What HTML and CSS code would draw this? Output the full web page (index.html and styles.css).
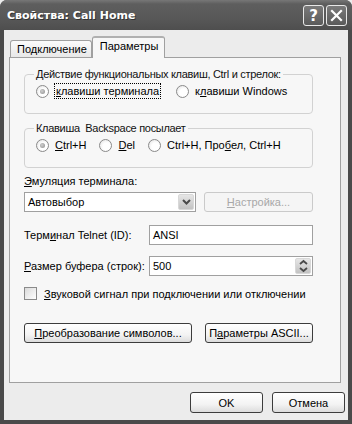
FILE: index.html
```html
<!DOCTYPE html>
<html lang="ru">
<head>
  <meta charset="UTF-8" />
  <title>Свойства: Call Home</title>
  <link rel="stylesheet" href="styles.css">
</head>
<body>

  <div class="window">
    <!-- Title bar -->
    <div class="titlebar">
      <span class="title">Свойства: Call Home</span>
      <div class="caption-btns">
        <span class="cbtn">?</span>
        <span class="cbtn">
          <svg width="13" height="13" viewBox="0 0 13 13"><path d="M2 2 L11 11 M11 2 L2 11" stroke="#fff" stroke-width="2.2" stroke-linecap="square"/></svg>
        </span>
      </div>
    </div>

    <div class="client">
      <div class="tabs">
        <div class="tab">Подключение</div>
        <div class="tab active">Параметры</div>
      </div>

      <div class="panel">
        <fieldset class="group">
          <legend>Действие функциональных клавиш, Ctrl и стрелок:</legend>
          <div class="row radios">
            <label class="radio"><span class="rb on"></span><span class="focus"><u>к</u>лавиши терминала</span></label>
            <label class="radio r2"><span class="rb"></span><span>к<u>л</u>авиши Windows</span></label>
          </div>
        </fieldset>

        <fieldset class="group g2">
          <legend>Клавиша&nbsp; Backspace посылает</legend>
          <div class="row radios">
            <label class="radio"><span class="rb on"></span><span><u>C</u>trl+H</span></label>
            <label class="radio r-del"><span class="rb"></span><span><u>D</u>el</span></label>
            <label class="radio r-sp"><span class="rb"></span><span>Ctrl+H, Про<u>б</u>ел, Ctrl+H</span></label>
          </div>
        </fieldset>

        <div class="caption"><u>Э</u>муляция терминала:</div>
        <div class="row combo-row">
          <div class="combo">
            <span>Автовыбор</span>
            <span class="combo-btn">
              <svg width="9" height="6" viewBox="0 0 9 6"><path d="M1 1 L4.5 4.5 L8 1" fill="none" stroke="#4a4a4a" stroke-width="2"/></svg>
            </span>
          </div>
          <div class="btn disabled"><u>Н</u>астройка...</div>
        </div>

        <div class="row field-row">
          <span class="field-label">Терм<u>и</u>нал Telnet (ID):</span>
          <div class="edit">ANSI</div>
        </div>

        <div class="row field-row">
          <span class="field-label"><u>Р</u>азмер буфера (строк):</span>
          <div class="edit spin">
            <span>500</span>
            <span class="spin-btn">
              <svg width="9" height="14" viewBox="0 0 9 14"><path d="M1 5 L4.5 2 L8 5 M1 9 L4.5 12 L8 9" fill="none" stroke="#4a4a4a" stroke-width="1.8"/></svg>
            </span>
          </div>
        </div>

        <label class="row check-row"><span class="cb"></span><span><u>З</u>вуковой сигнал при подключении или отключении</span></label>

        <div class="row btn-row">
          <div class="btn wide"><u>П</u>реобразование символов...</div>
          <div class="btn ascii">П<u>а</u>раметры ASCII...</div>
        </div>
      </div>

      <div class="footer">
        <div class="btn dlg">OK</div>
        <div class="btn dlg">Отмена</div>
      </div>
    </div>
  </div>

</body>
</html>
```

FILE: styles.css
```css
body {
  margin: 0;
  background: #ececec;
  font-family: "Liberation Sans", Arial, sans-serif;
  font-size: 11px;
  color: #000;
  white-space: nowrap;
}
u {
  text-decoration: underline;
  text-underline-offset: 1px;
}
.window {
  width: 352px;
  height: 424px;
  box-sizing: border-box;
  background: #4a4a4a;
  display: flex;
  flex-direction: column;
  border-radius: 7px 7px 0 0;
  overflow: hidden;
}
.titlebar {
  height: 30px;
  display: flex;
  align-items: center;
  justify-content: space-between;
  padding: 0 5px 0 7px;
  background: linear-gradient(#777 0, #5e5e5e 4px, #585858 60%, #4e4e4e 100%);
  color: #fff;
}
.title {
  font-family: "DejaVu Sans", sans-serif;
  font-weight: bold;
  font-size: 11px;
  text-shadow: 1px 1px 0 #333;
}
.caption-btns {
  display: flex;
  gap: 2px;
  margin-top: 1px;
}
.cbtn {
  width: 19px;
  height: 19px;
  border: 1px solid #e8e8e8;
  border-radius: 3px;
  background: linear-gradient(#7a7a7a, #5a5a5a);
  color: #fff;
  font-family: "DejaVu Sans", sans-serif;
  font-weight: bold;
  font-size: 15px;
  display: flex;
  align-items: center;
  justify-content: center;
}
.client {
  flex: 1;
  margin: 0 4px 4px 4px;
  background: #ececec;
  display: flex;
  flex-direction: column;
}
.tabs {
  display: flex;
  align-items: flex-end;
  padding: 5px 0 0 6px;
  height: 22px;
}
.tab {
  height: 16px;
  padding: 0 4px 0 6px;
  border: 1px solid #a0a0a0;
  border-bottom: none;
  border-radius: 3px 3px 0 0;
  background: linear-gradient(#fbfbfb, #e8e8e8);
  line-height: 17px;
}
.tab.active {
  height: 20px;
  padding: 0 6px 0 7px;
  background: #f7f7f7;
  border-top: 2px solid #b0b0b0;
  margin-bottom: -1px;
  position: relative;
  z-index: 1;
  line-height: 16px;
}
.panel {
  margin: 0 7px 0 5px;
  height: 326px;
  box-sizing: border-box;
  border: 1px solid #a0a0a0;
  background: #f7f7f7;
  padding: 10px 27px 0 14px;
  display: flex;
  flex-direction: column;
}
.group {
  margin: 0;
  padding: 2px 0 0 9px;
  height: 46px;
  box-sizing: border-box;
  border: 1px solid #d2d2d2;
  border-radius: 4px;
}
.group legend {
  padding: 0 2px;
  line-height: 13px;
  color: #111;
  letter-spacing: -0.3px;
}
.g2 {
  margin-top: 8px;
}
.row {
  display: flex;
  align-items: center;
}
.radios {
  margin-left: 2px;
  height: 16px;
}
.radio {
  display: flex;
  align-items: center;
  gap: 6px;
}
.rb {
  width: 11px;
  height: 11px;
  border: 1px solid #8a8a8a;
  border-radius: 50%;
  background: radial-gradient(circle at 60% 60%, #fff 40%, #dedede 100%);
  box-sizing: content-box;
  display: flex;
  align-items: center;
  justify-content: center;
}
.rb.on::after {
  content: "";
  width: 5px;
  height: 5px;
  border-radius: 50%;
  background: radial-gradient(circle at 40% 40%, #cfcfcf, #8c8c8c);
}
.focus {
  outline: 1px dotted #000;
  outline-offset: 0;
  padding: 1px 1px;
}
.r2 {
  margin-left: 16px;
}
.r-del {
  margin-left: 13px;
}
.r-sp {
  margin-left: 13px;
}
.caption {
  margin-top: 6px;
  line-height: 14px;
}
.combo-row {
  margin-top: 4px;
  justify-content: space-between;
}
.combo {
  width: 172px;
  height: 20px;
  box-sizing: border-box;
  border: 1px solid #a0a0a0;
  background: #fff;
  display: flex;
  align-items: center;
  justify-content: space-between;
  padding: 0 1px 0 3px;
}
.combo-btn, .spin-btn {
  width: 16px;
  height: 16px;
  box-sizing: border-box;
  border-radius: 2px;
  background: linear-gradient(#e6e6e6, #c2c2c2);
  border: 1px solid #d8d8d8;
  display: flex;
  align-items: center;
  justify-content: center;
}
.btn {
  height: 20px;
  box-sizing: border-box;
  border: 1px solid #3c3c3c;
  border-radius: 3px;
  background: linear-gradient(#ffffff 0%, #f3f3f3 60%, #dcdcdc 100%);
  display: flex;
  align-items: center;
  justify-content: center;
}
.btn.disabled {
  width: 109px;
  border-color: #cacaca;
  background: #f5f5f5;
  color: #a8a8a8;
}
.field-row {
  margin-top: 13px;
  justify-content: space-between;
}
.field-row + .field-row {
  margin-top: 11px;
}
.edit {
  width: 164px;
  height: 20px;
  box-sizing: border-box;
  border: 1px solid #a0a0a0;
  background: #fff;
  padding: 0 3px;
  display: flex;
  align-items: center;
}
.edit.spin {
  justify-content: space-between;
  padding-right: 1px;
}
.check-row {
  margin-top: 11px;
  gap: 7px;
}
.cb {
  width: 11px;
  height: 11px;
  border: 1px solid #8a8a8a;
  background: linear-gradient(135deg, #dadada, #fff);
}
.btn-row {
  margin-top: 23px;
  justify-content: space-between;
}
.btn.wide {
  width: 168px;
}
.btn.ascii {
  width: 108px;
}
.footer {
  display: flex;
  justify-content: flex-end;
  gap: 9px;
  padding: 9px 3px 0 0;
}
.btn.dlg {
  width: 73px;
  height: 21px;
}
```
